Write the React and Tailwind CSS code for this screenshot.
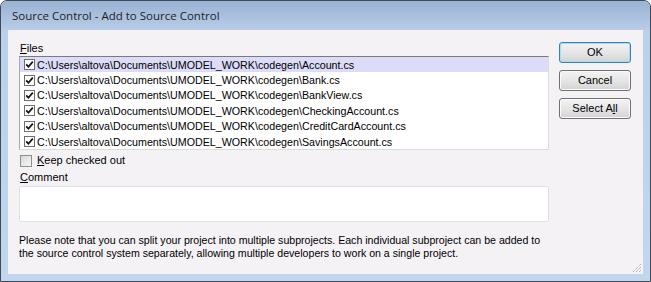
import React from 'react'

const FILES = [
  'Account.cs',
  'Bank.cs',
  'BankView.cs',
  'CheckingAccount.cs',
  'CreditCardAccount.cs',
  'SavingsAccount.cs',
]
const BASE = 'C:\\Users\\altova\\Documents\\UMODEL_WORK\\codegen\\'

function Check() {
  return (
    <span className="w-[11px] h-[11px] shrink-0 border border-[#6f6f6f] bg-white flex items-center justify-center">
      <svg width="9" height="9" viewBox="0 0 9 9">
        <path d="M1.2 4.4 L3.4 6.7 L7.8 1.6" fill="none" stroke="#111" strokeWidth="1.7" />
      </svg>
    </span>
  )
}

function Btn({ children, primary }) {
  return (
    <button
      className={`h-[21px] w-[72px] rounded-[3px] border text-[11px] text-black leading-none bg-gradient-to-b from-[#f3f3f3] via-[#e6e6e6] to-[#d3d3d3] ${
        primary ? 'border-[#3c7fb1] shadow-[inset_0_0_0_1px_#a6dcf5]' : 'border-[#707070] shadow-[inset_0_0_0_1px_#fbfbfb]'
      }`}
    >
      {children}
    </button>
  )
}

export default function App() {
  return (
    <div className="w-[651px] h-[282px] border border-[#3f4a55] rounded-t-[7px] overflow-hidden flex flex-col bg-gradient-to-b from-[#b9cfeb] to-[#c2d6ef] font-['Liberation_Sans',Arial,sans-serif]">
      {/* Title bar */}
      <div className="h-[29px] shrink-0 bg-gradient-to-b from-[#9ab2d3] to-[#b7cde9] pl-[11px] pt-[1px] flex items-center">
        <span className="font-['Open_Sans',sans-serif] text-[11.5px] text-[#1e1e1e]">Source Control - Add to Source Control</span>
      </div>

      {/* Client */}
      <div className="relative flex-1 mx-[7px] mb-[7px] bg-[#f5f2f6] flex pl-[11px] pt-[10px] text-[11px] text-black">
        <div className="w-[530px] flex flex-col">
          <div className="h-[16px] leading-[16px] pl-[1px]"><span className="underline underline-offset-1">F</span>iles</div>

          <div className="h-[94px] bg-white border border-t-[#7a7a7a] border-l-[#a9a9a9] border-r-[#dcdcdc] border-b-[#dcdcdc] overflow-hidden">
            {FILES.map((f, i) => (
              <div
                key={f}
                className={`h-[15.4px] flex items-center gap-[2px] pl-[4px] text-[10.7px] ${i === 0 ? 'bg-[#dcdcf8]' : ''}`}
              >
                <Check />
                <span className="whitespace-nowrap">{BASE + f}</span>
              </div>
            ))}
          </div>

          <div className="mt-[4px] h-[13px] flex items-center gap-[5px] pl-[1px]">
            <span className="w-[12px] h-[12px] border border-[#8e8f8f] bg-gradient-to-br from-[#d8d8d8] to-[#f6f6f6]" />
            <span><span className="underline underline-offset-1">K</span>eep checked out</span>
          </div>

          <div className="mt-[3px] h-[14px] leading-[14px] pl-[1px]"><span className="underline underline-offset-1">C</span>omment</div>
          <div className="mt-[2px] h-[36px] bg-white border border-[#dfe0e6] rounded-[2px]" />

          <p className="mt-[12px] leading-[13px] w-[560px] text-[10.6px]">
            Please note that you can split your project into multiple subprojects. Each individual subproject can be added to
            <br />
            the source control system separately, allowing multiple developers to work on a single project.
          </p>
        </div>

        <div className="ml-[10px] pt-[2px] flex flex-col gap-[7px]">
          <Btn primary>OK</Btn>
          <Btn>Cancel</Btn>
          <Btn>Select A<span className="underline underline-offset-1">l</span>l</Btn>
        </div>

        {/* resize grip */}
        <svg className="absolute right-[1px] bottom-[1px]" width="12" height="12" viewBox="0 0 12 12">
          <path d="M11 3 L3 11 M11 6 L6 11 M11 9 L9 11" stroke="#9a9aa0" strokeWidth="1" strokeDasharray="1 1" />
        </svg>
      </div>
    </div>
  )
}
